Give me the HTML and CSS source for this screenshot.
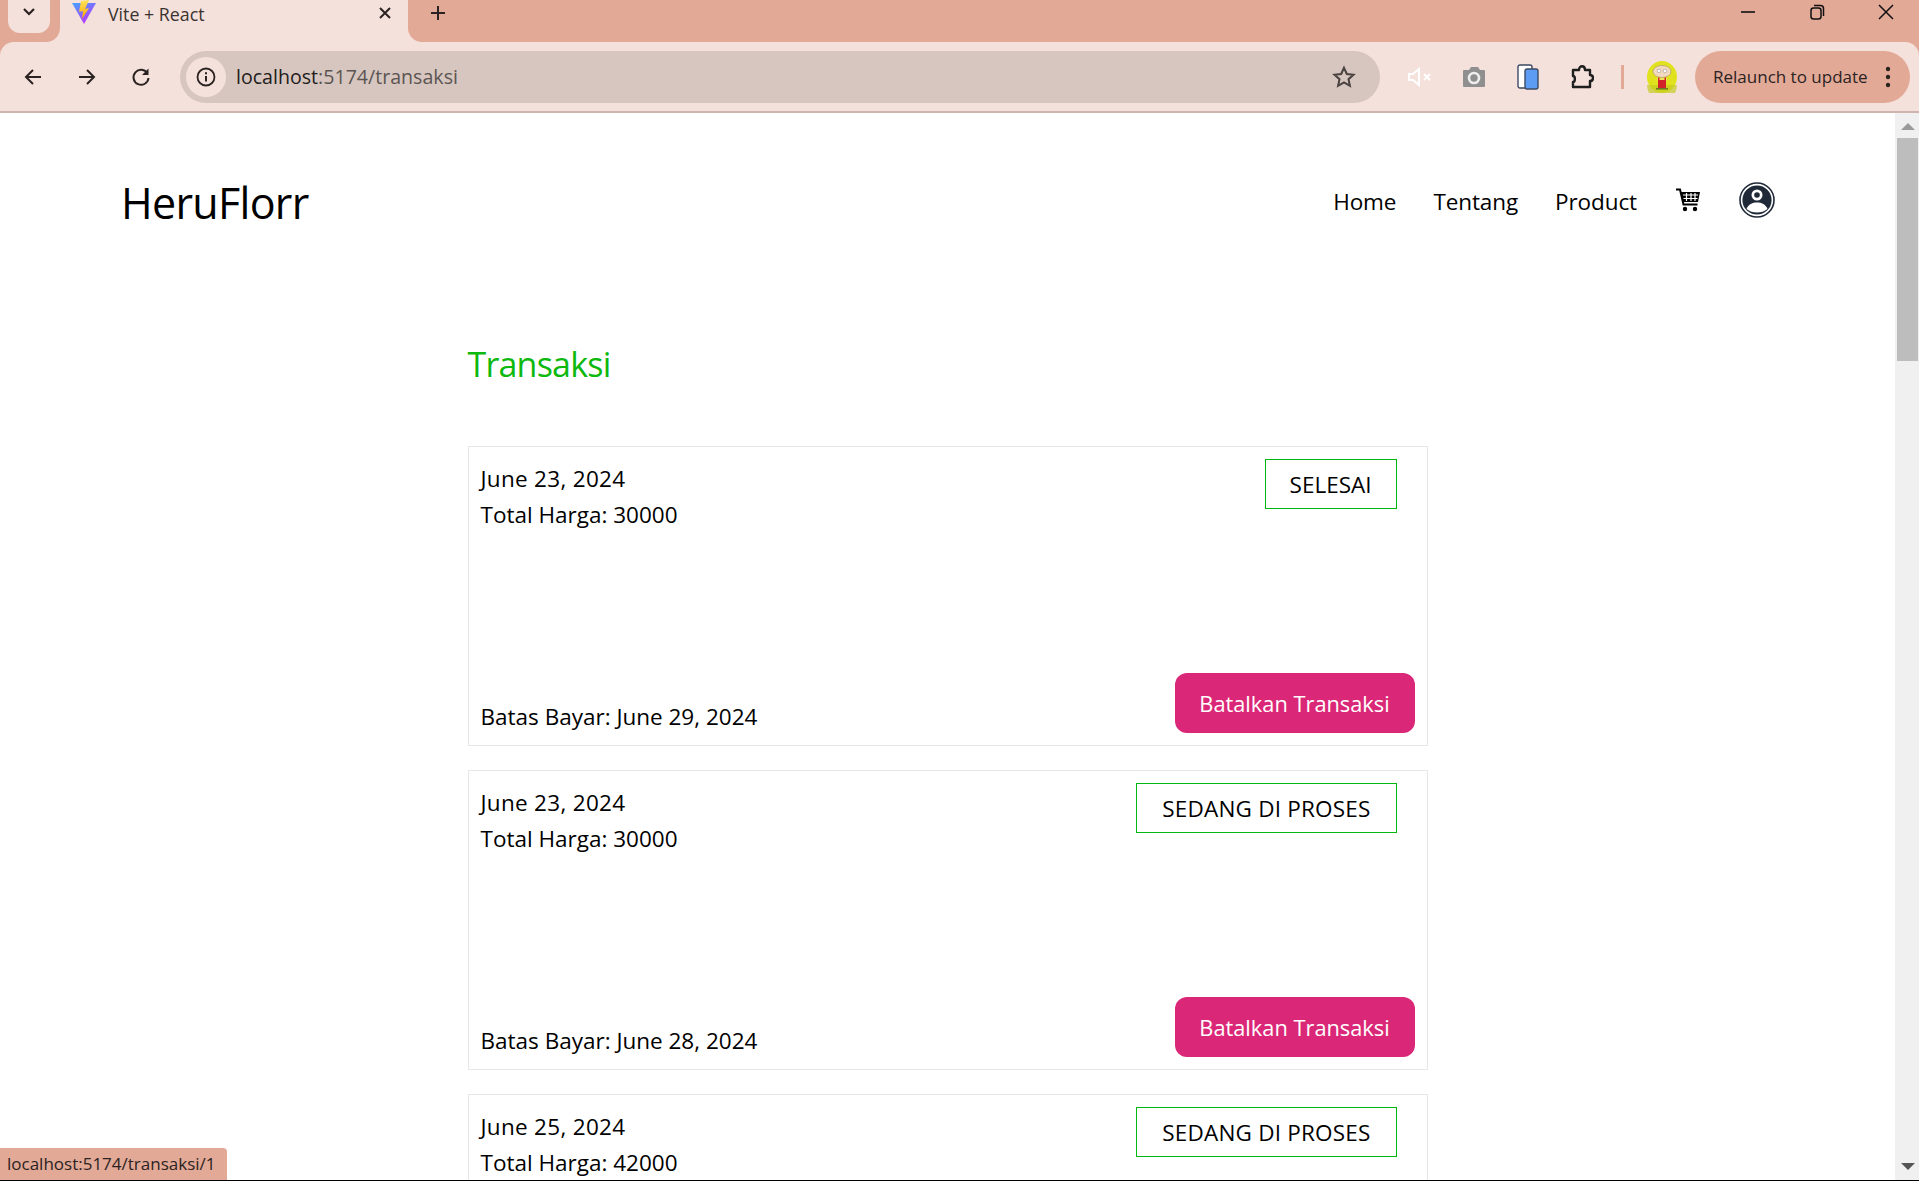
FILE: index.html
```html
<!DOCTYPE html>
<html lang="en">
  <head>
    <meta charset="UTF-8" />
    <title>Vite + React</title>
    <link rel="stylesheet" href="styles.css">
  </head>
  <body>
    <div class="window">
      <header class="chrome">
        <div class="tabstrip">
          <div class="strip-left">
            <button class="tab-search">
              <svg width="14" height="10" viewBox="0 0 14 10"><path d="M2 2l5 5 5-5" fill="none" stroke="#2b2322" stroke-width="2.2"/></svg>
            </button>
          </div>
          <div class="tab">
            <svg class="favicon" width="24" height="24" viewBox="0 0 24 24">
              <defs>
                <linearGradient id="vb" x1="0" y1="0" x2="0.6" y2="1"><stop offset="0" stop-color="#41a5ff"/><stop offset="1" stop-color="#bd34fe"/></linearGradient>
                <linearGradient id="vy" x1="0" y1="0" x2="0" y2="1"><stop offset="0" stop-color="#ffe25a"/><stop offset="1" stop-color="#ffa800"/></linearGradient>
              </defs>
              <path d="M0 3l24 0-12 21z" fill="url(#vb)"/>
              <path d="M17 0L9 1 7 12l4-1-1 8 7-11-4 1z" fill="url(#vy)"/>
            </svg>
            <span class="tab-title">Vite + React</span>
            <svg class="tab-close" width="14" height="14" viewBox="0 0 14 14"><path d="M2 2l10 10M12 2L2 12" stroke="#2b2322" stroke-width="2"/></svg>
          </div>
          <div class="strip-right">
            <svg class="new-tab" width="16" height="16" viewBox="0 0 16 16"><path d="M8 1v14M1 8h14" stroke="#2b2322" stroke-width="2"/></svg>
            <div class="window-controls">
              <svg width="16" height="16" viewBox="0 0 16 16"><path d="M1 8h14" stroke="#111" stroke-width="1.6"/></svg>
              <svg width="16" height="16" viewBox="0 0 16 16"><rect x="2" y="4" width="10" height="11" rx="2.5" fill="none" stroke="#111" stroke-width="1.5"/><path d="M5 1.500h6.500a3 3 0 0 1 3 3V12" fill="none" stroke="#111" stroke-width="1.5"/></svg>
              <svg width="16" height="16" viewBox="0 0 16 16"><path d="M1 1l14 14M15 1L1 15" stroke="#111" stroke-width="1.5"/></svg>
            </div>
          </div>
        </div>
        <div class="toolbar">
          <div class="tool-btn">
            <svg width="20" height="20" viewBox="0 0 20 20"><path d="M18 10H3M10 3l-7 7 7 7" fill="none" stroke="#2b2322" stroke-width="2"/></svg>
          </div>
          <div class="tool-btn">
            <svg width="20" height="20" viewBox="0 0 20 20"><path d="M2 10h15M10 3l7 7-7 7" fill="none" stroke="#2b2322" stroke-width="2"/></svg>
          </div>
          <div class="tool-btn">
            <svg width="20" height="20" viewBox="0 0 20 20"><path d="M16.500 6.500A7.500 7.500 0 1 0 17.500 11" fill="none" stroke="#2b2322" stroke-width="2"/><path d="M17.500 1.500v6.500h-6.500z" fill="#2b2322"/></svg>
          </div>
          <div class="address">
            <span class="site-info">
              <svg width="20" height="20" viewBox="0 0 20 20"><circle cx="10" cy="10" r="8.500" fill="none" stroke="#2b2322" stroke-width="1.8"/><path d="M10 9v5.500M10 5.200v2" stroke="#2b2322" stroke-width="2"/></svg>
            </span>
            <span class="url">localhost<span class="url-path">:5174/transaksi</span></span>
            <svg class="star" width="24" height="24" viewBox="0 0 24 24"><path d="M12 2.800l2.800 6.200 6.700.7-5 4.500 1.400 6.600L12 17.400l-5.900 3.400 1.400-6.600-5-4.500 6.700-.7z" fill="none" stroke="#4a4240" stroke-width="2"/></svg>
          </div>
          <div class="extensions">
            <div class="tool-btn">
              <svg width="26" height="22" viewBox="0 0 26 22"><path d="M2 8h4l6-5v16l-6-5H2z" fill="none" stroke="#fff" stroke-width="2"/><path d="M17 8l6 6M23 8l-6 6" stroke="#fff" stroke-width="2"/></svg>
            </div>
            <div class="tool-btn">
              <svg width="24" height="22" viewBox="0 0 24 22"><path d="M2 4h5l2-3h7l2 3h4a1 1 0 0 1 1 1v15a1 1 0 0 1-1 1H2a1 1 0 0 1-1-1V5a1 1 0 0 1 1-1z" fill="#8f8f8f"/><circle cx="12" cy="12" r="5" fill="none" stroke="#eee" stroke-width="2.600"/></svg>
            </div>
            <div class="tool-btn">
              <svg width="22" height="26" viewBox="0 0 22 26"><rect x="1" y="1" width="14" height="23" rx="2" fill="#fff" stroke="#3c4a63" stroke-width="1.4"/><rect x="8" y="5" width="13" height="20" rx="2" fill="#5c9cf5" stroke="#3c4a63" stroke-width="1.4"/></svg>
            </div>
            <div class="tool-btn">
              <svg width="24" height="26" viewBox="0 0 24 26"><path d="M3 6h6c0-5 6-5 6 0h5v5c4 0 4 6 0 6v6H3v-5c2.500 0 2.500-6 0-6z" fill="none" stroke="#1f1f1f" stroke-width="2.400" stroke-linejoin="round"/></svg>
            </div>
          </div>
          <span class="separator"></span>
          <svg class="avatar" width="30" height="32" viewBox="0 0 30 32">
            <ellipse cx="15" cy="16" rx="15" ry="16" fill="#dfe21d"/>
            <path d="M0 24h30a15 16 0 0 1-30 0z" fill="#c5cc22" opacity=".7"/>
            <ellipse cx="15" cy="10.500" rx="9" ry="6" fill="#f3d9bd" stroke="#a58f78" stroke-width=".6"/>
            <circle cx="12" cy="10" r="1.800" fill="#fff" stroke="#888" stroke-width=".5"/>
            <circle cx="18" cy="10" r="1.800" fill="#fff" stroke="#888" stroke-width=".5"/>
            <rect x="10" y="17" width="10" height="3" fill="#f1e05a"/>
            <rect x="11" y="19" width="8" height="8" fill="#d3232a"/>
            <rect x="11" y="16.500" width="1.500" height="3" fill="#d3232a"/>
            <rect x="17.500" y="16.500" width="1.500" height="3" fill="#d3232a"/>
            <rect x="9" y="27" width="12" height="1.600" fill="#6a7a20"/>
          </svg>
          <div class="relaunch">
            <span>Relaunch to update</span>
            <svg width="6" height="24" viewBox="0 0 6 24"><circle cx="3" cy="4" r="2.200" fill="#2b2322"/><circle cx="3" cy="12" r="2.200" fill="#2b2322"/><circle cx="3" cy="20" r="2.200" fill="#2b2322"/></svg>
          </div>
        </div>
      </header>

      <div class="viewport">
        <div class="page">
          <nav>
            <a class="logo" href="#">HeruFlorr</a>
            <ul>
              <li class="nav-link"><a href="#">Home</a></li>
              <li class="nav-link"><a href="#">Tentang</a></li>
              <li class="nav-link"><a href="#">Product</a></li>
              <li class="nav-icon">
                <svg width="26" height="26" viewBox="0 0 26 26">
                  <path d="M1 2.500h4l3.500 15h14" fill="none" stroke="#000" stroke-width="2"/>
                  <path d="M6 5h19l-2 10H8z" fill="#000"/>
                  <path d="M8 8h15M8.500 11.500h14M11.500 6v8M16 6v8M20 6v8" stroke="#fff" stroke-width="1.2"/>
                  <circle cx="10" cy="22" r="2.200" fill="#000"/>
                  <circle cx="20" cy="22" r="2.200" fill="#000"/>
                </svg>
              </li>
              <li class="nav-icon">
                <svg width="36" height="36" viewBox="0 0 36 36">
                  <circle cx="18" cy="18" r="17" fill="none" stroke="#1f2937" stroke-width="1.6"/>
                  <circle cx="18" cy="18" r="14.600" fill="#1f2937"/>
                  <circle cx="18" cy="13" r="5.500" fill="#fff"/>
                  <circle cx="18" cy="13" r="2.800" fill="#1f2937"/>
                  <path d="M7.500 27c2-5 6-6.500 10.500-6.500s8.500 1.500 10.500 6.500c-3 2.500-6.500 3.500-10.500 3.500s-7.500-1-10.500-3.500z" fill="#fff"/>
                </svg>
              </li>
            </ul>
          </nav>

          <main class="transaksi">
            <h1>Transaksi</h1>

            <article class="card">
              <div class="card-row">
                <div class="card-info">
                  <p class="date">June 23, 2024</p>
                  <p>Total Harga: 30000</p>
                </div>
                <span class="status status-done">SELESAI</span>
              </div>
              <div class="card-row card-bottom">
                <p class="due">Batas Bayar: June 29, 2024</p>
                <button class="cancel">Batalkan Transaksi</button>
              </div>
            </article>

            <article class="card">
              <div class="card-row">
                <div class="card-info">
                  <p class="date">June 23, 2024</p>
                  <p>Total Harga: 30000</p>
                </div>
                <span class="status">SEDANG DI PROSES</span>
              </div>
              <div class="card-row card-bottom">
                <p class="due">Batas Bayar: June 28, 2024</p>
                <button class="cancel">Batalkan Transaksi</button>
              </div>
            </article>

            <article class="card">
              <div class="card-row">
                <div class="card-info">
                  <p class="date">June 25, 2024</p>
                  <p>Total Harga: 42000</p>
                </div>
                <span class="status">SEDANG DI PROSES</span>
              </div>
            </article>
          </main>
        </div>

        <div class="scrollbar">
          <span class="arrow-up"></span>
          <span class="thumb"></span>
          <span class="arrow-down"></span>
        </div>

        <div class="link-preview">localhost:5174/transaksi/1</div>
      </div>
    </div>
  </body>
</html>
```

FILE: styles.css
```css
* {
  margin: 0;
  padding: 0;
  box-sizing: border-box;
  font-family: "Open Sans", sans-serif;
}

body {
  background: #000;
  height: 1181px;
  overflow: hidden;
}

.window {
  display: flex;
  flex-direction: column;
  height: 1180px;
  background: #fff;
}

/* Browser frame */
.chrome {
  background: #e2a997;
  flex-shrink: 0;
}

.tabstrip {
  display: flex;
  height: 42px;
  background: #f5e1db;
}

.strip-left {
  width: 60px;
  padding-left: 8px;
  background: #e2a997;
  border-bottom-right-radius: 14px;
}

.tab-search {
  display: flex;
  align-items: center;
  justify-content: center;
  width: 42px;
  height: 33px;
  padding-bottom: 10px;
  background: #f5e1db;
  border: none;
  border-radius: 0 0 12px 12px;
}

.tab {
  display: flex;
  align-items: flex-start;
  width: 348px;
  padding: 0 16px 0 12px;
}

.tab-title {
  margin-left: 12px;
  font-size: 17.8px;
  line-height: 28px;
  color: #3a3331;
}

.tab-close {
  margin: 6px 0 0 auto;
}

.strip-right {
  display: flex;
  flex: 1;
  align-items: flex-start;
  background: #e2a997;
  border-bottom-left-radius: 14px;
}

.new-tab {
  margin: 5px 0 0 22px;
}

.window-controls {
  display: flex;
  gap: 53px;
  margin: 4px 25px 0 auto;
}

.toolbar {
  display: flex;
  align-items: center;
  height: 71px;
  padding-left: 6px;
  background: #f5e1db;
  border-top-left-radius: 14px;
  border-top-right-radius: 14px;
  border-bottom: 2px solid #d0b3ac;
}

.tool-btn {
  display: flex;
  align-items: center;
  justify-content: center;
  width: 54px;
  height: 52px;
}

.address {
  display: flex;
  align-items: center;
  width: 1200px;
  height: 52px;
  margin-left: 12px;
  padding: 0 24px 0 6px;
  background: #d7c6bf;
  border-radius: 26px;
}

.site-info {
  display: flex;
  align-items: center;
  justify-content: center;
  width: 40px;
  height: 40px;
  background: #f5e1db;
  border-radius: 50%;
}

.url {
  margin-left: 10px;
  font-size: 19.6px;
  color: #221c1b;
}

.url-path {
  color: #5b5553;
}

.star {
  margin-left: auto;
}

.extensions {
  display: flex;
  margin-left: 13px;
}

.separator {
  width: 3px;
  height: 24px;
  margin-left: 12px;
  background: #e2a997;
}

.avatar {
  margin-left: 23px;
}

.relaunch {
  display: flex;
  align-items: center;
  justify-content: space-between;
  width: 215px;
  height: 52px;
  margin-left: 18px;
  padding: 0 19px 0 18px;
  background: #e2a997;
  border-radius: 26px;
  font-size: 17px;
  color: #2b2322;
}

/* Page */
.viewport {
  display: flex;
  flex: 1;
  position: relative;
  min-height: 0;
}

.page {
  flex: 1;
  overflow: hidden;
  color: #000;
}

nav {
  display: flex;
  align-items: center;
  justify-content: space-between;
  height: 180px;
  padding: 0 120px 0 121px;
}

.logo {
  margin-top: -2px;
  font-size: 43px;
  letter-spacing: -0.7px;
  color: #000;
  text-decoration: none;
}

nav ul {
  display: flex;
  align-items: center;
  gap: 37px;
  list-style: none;
}

.nav-link {
  margin-top: -3px;
  font-size: 22.5px;
  letter-spacing: -0.1px;
}

.nav-link a {
  color: #000;
  text-decoration: none;
}

.nav-icon {
  display: flex;
  margin: -6px 0 0 1px;
}

.transaksi {
  width: 960px;
  margin: 0 auto;
  padding-top: 47px;
}

h1 {
  height: 50px;
  margin-bottom: 56px;
  font-size: 34px;
  font-weight: 400;
  letter-spacing: -0.8px;
  line-height: 48px;
  color: #0db80f;
}

.card {
  display: flex;
  flex-direction: column;
  justify-content: space-between;
  height: 300px;
  margin-bottom: 24px;
  padding: 12px;
  border: 1px solid #e5e7eb;
  font-size: 22.5px;
  line-height: 36px;
}

.card-row {
  display: flex;
  justify-content: space-between;
}

.card-info {
  padding-top: 2px;
}

.date {
  letter-spacing: 0.3px;
}

.card-bottom {
  align-items: flex-end;
}

.due {
  margin-bottom: -2px;
}

.status {
  height: 50px;
  margin-right: 18px;
  padding: 0 25px;
  border: 1px solid #00b80f;
  letter-spacing: 0.2px;
  line-height: 50px;
}

.status-done {
  padding: 0 24px;
  letter-spacing: 0;
}

.cancel {
  width: 240px;
  height: 60px;
  background: #db2777;
  border: none;
  border-radius: 12px;
  color: #fff;
  font-size: 21.8px;
}

.scrollbar {
  display: flex;
  flex-direction: column;
  align-items: center;
  width: 24px;
  padding-left: 1px;
  background: #f0f0f0;
}

.thumb {
  width: 21px;
  height: 223px;
  margin-top: 8px;
  background: #bdbdbd;
}

.arrow-up {
  margin-top: 10px;
  border-left: 7px solid transparent;
  border-right: 7px solid transparent;
  border-bottom: 7px solid #9a9a9a;
}

.arrow-down {
  margin-top: auto;
  margin-bottom: 10px;
  border-left: 7px solid transparent;
  border-right: 7px solid transparent;
  border-top: 7px solid #555;
}

/* Hovered link preview, sits over the page */
.link-preview {
  position: absolute;
  left: 0;
  bottom: 0;
  width: 227px;
  height: 32px;
  padding-left: 7px;
  background: #e2a997;
  border-top-right-radius: 4px;
  font-size: 17px;
  line-height: 32px;
  color: #2b2322;
}
```
